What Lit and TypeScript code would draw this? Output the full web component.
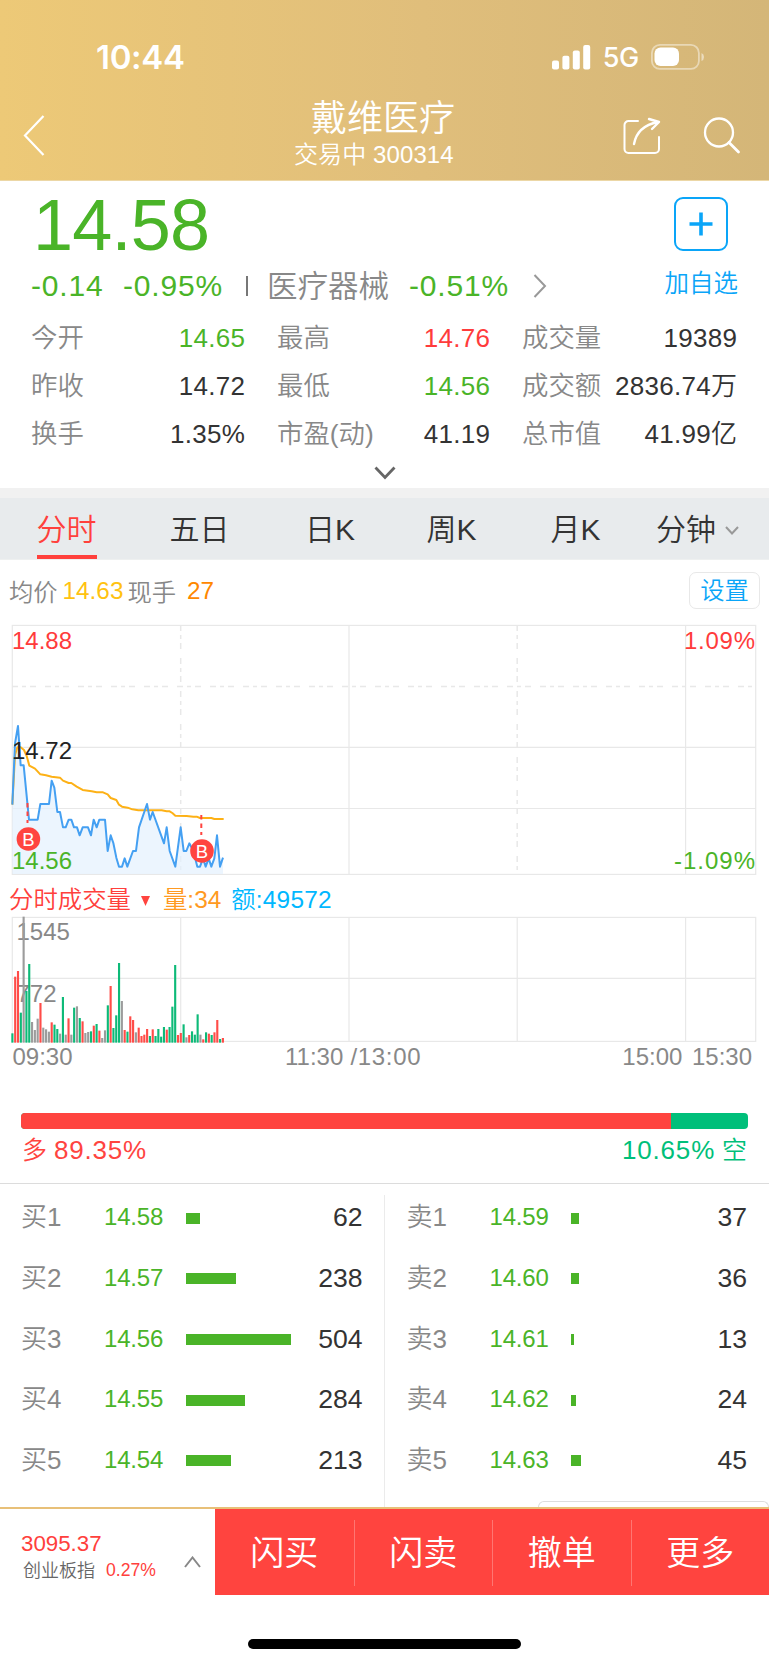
import { LitElement, html, css, svg } from "lit";
import { customElement } from "lit/decorators.js";

type Tone = "up" | "down" | "flat";

const STATS: [string, string, Tone][] = [
  ["今开", "14.65", "down"], ["最高", "14.76", "up"], ["成交量", "19389", "flat"],
  ["昨收", "14.72", "flat"], ["最低", "14.56", "down"], ["成交额", "2836.74万", "flat"],
  ["换手", "1.35%", "flat"], ["市盈(动)", "41.19", "flat"], ["总市值", "41.99亿", "flat"],
];

const BIDS: [string, string, number, number][] = [
  ["买1", "14.58", 13.5, 62], ["买2", "14.57", 49.5, 238], ["买3", "14.56", 105, 504],
  ["买4", "14.55", 59, 284], ["买5", "14.54", 44.5, 213],
];
const ASKS: [string, string, number, number][] = [
  ["卖1", "14.59", 8, 37], ["卖2", "14.60", 8, 36], ["卖3", "14.61", 3.5, 13],
  ["卖4", "14.62", 5.5, 24], ["卖5", "14.63", 10, 45],
];

/* Chart series use a grid of three units per CSS pixel. */
const PRICE =
  "37,554 45,370 54,318 62,436 71,436 87,599 113,599 121,552 147,552 155,482 163,503 172,576 180,576 189,622 197,622 206,599 214,599 222,622 231,622 239,646 248,622 264,622 273,646 281,599 290,622 298,599 315,599 323,693 332,646 340,669 349,713 357,740 366,740 374,715 382,740 399,693 408,693 417,622 441,552 450,599 458,576 492,670 500,622 509,693 526,740 542,622 551,693 559,693 568,670 580,693 592,740 600,740 609,715 617,740 626,715 634,740 643,715 651,646 660,740 669,713";
const AVERAGE =
  "37,554 45,405 52,382 62,382 72,390 80,408 88,437 105,446 121,463 138,466 155,470 180,473 189,482 206,489 214,489 230,500 248,510 275,514 290,517 309,517 323,523 332,534 349,540 357,554 366,560 383,563 397,568 415,571 485,571 500,574 509,574 517,579 526,587 560,588 580,590 590,590 600,594 634,594 643,597 671,597";
const VOLUME =
  "460g 290r 273r 398g 110x 333g 252g 426x 450x 416x 369r 443x 448x 455x 427r 434g 447g 461x 351g 464x 415r 464x 383g 379x 414g 424r 459x 456x 454g 437r 432g 452r 474x 451x 376g 318r 444g 406g 249g 363x 450r 455g 409r 420r 457x 443r 468r 464r 447r 468g 448r 468g 447g 470g 441g 449r 441g 380g 255g 465r 459r 433g 472x 465r 454g 464g 403g 464x 478r 457g 461r 465g 457r 420r 477g 474r".split(" ");

@customElement("app-root")
export class AppRoot extends LitElement {
  static styles = css`
    :host {
      display: block;
      width: 769px;
      height: 1665px;
      overflow: hidden;
      background: #fff;
      color: #333;
      font-family: "Liberation Sans", "Noto Sans CJK SC", sans-serif;
      font-weight: 350;
      white-space: nowrap;
    }
    * { box-sizing: border-box; }
    svg { display: block; flex: none; }
    .up { color: #ff3b3b; }
    .down { color: #4ab428; }
    .flat { color: #333; }

    .header {
      height: 181px;
      color: #fff;
      background: linear-gradient(90deg, #edc977, #e0be7b 55%, #d4b678);
      border-bottom: 1px solid #ecd7a6;
    }
    .status {
      display: flex;
      align-items: center;
      height: 99px;
      padding: 15px 64px 0 96px;
    }
    .clock { flex: 1; font: 600 33px/40px Inter, sans-serif; letter-spacing: -0.3px; }
    .net { font: 500 27px/34px Inter, sans-serif; margin: 2px 12px 0 12px; letter-spacing: -0.3px; }
    .nav { display: flex; height: 81px; }
    .nav svg.back { margin: 15px 0 0 22px; }
    .titles { flex: 1; display: flex; flex-direction: column; align-items: flex-start; padding: 2px 0 0 249px; }
    .title { font-size: 36px; line-height: 36px; margin: 0 0 0 17px; }
    .subtitle { font-size: 24px; line-height: 28px; margin-top: 4px; letter-spacing: 0.1px; }
    .share { margin: 17px 41px 0 0; }
    .search { margin: 17px 28px 0 0; }

    .quote { height: 307px; padding: 5px 31px 0 31px; }
    .top { display: flex; height: 76px; justify-content: space-between; }
    .price { font-size: 72px; line-height: 78px; margin-left: 2px; letter-spacing: -0.8px; }
    .add { width: 54px; height: 54px; margin: 11px 10px 0 0; border: 2px solid #0aa5f8; border-radius: 9px; display: grid; place-items: center; }
    .change { display: flex; align-items: center; height: 47px; font-size: 30px; color: #4ab428; }
    .change span { line-height: 46px; }
    .c1, .c2, .c3 { letter-spacing: 0.8px; flex: none; }
    .c1 { width: 92px; }
    .c2, .c3 { width: 124px; }
    .c2 { width: 123px; }
    .sector { color: #888; width: 142px; font-size: 30.5px; }
    .bar { width: 2px; height: 20px; background: #777; margin: 0 19px 0 0; }
    .follow { margin-left: auto; color: #0aa5f8; font-size: 24.5px; padding-bottom: 4px; }
    .stats { display: grid; grid-template-columns: 214px 213px 215px; column-gap: 32px; grid-auto-rows: 48px; padding-top: 5px; }
    .stat { display: flex; justify-content: space-between; font-size: 26.4px; line-height: 48px; }
    .stat .k { color: #888; }
    .stat .v { font-size: 26px; letter-spacing: 0.3px; margin-right: -0.3px; }
    .expand { display: grid; place-items: center; height: 20px; margin-top: 5px; }

    .gap { height: 10px; background: #f1f1f1; }
    .tabs { display: grid; grid-template-columns: 133px 133px 128px 115px 133px 127px; height: 62px; background: #e8ebed; border-bottom: 1px solid #eef0f0; font-size: 30px; line-height: 64px; }
    .tab { display: flex; justify-content: center; }
    .tab.active { color: #ff403c; }
    .tab.active span { height: 61px; border-bottom: 4px solid #ff403c; }
    .tab.more { align-items: center; justify-content: flex-start; padding-left: 14px; gap: 9px; }

    .info { display: flex; align-items: center; height: 64px; padding: 0 9px 4px; font-size: 24.3px; color: #888; }
    .info .avg { color: #ffc211; margin: 2px 4px 0 5px; }
    .info .last { color: #ff8800; margin: 2px 0 0 11px; }
    .settings { margin-left: auto; width: 71px; height: 37px; border: 1.5px solid #e8e8e8; border-radius: 7px; color: #0aa5f8; line-height: 35px; text-align: center; }
    .plot text { font-family: "Liberation Sans", sans-serif; font-size: 24px; }
    .volhead { display: flex; align-items: center; height: 36px; padding: 11px 9px 0; font-size: 24.4px; line-height: 25px; color: #ff403c; }
    .volhead svg { margin: 2px 13px 0 10px; }
    .volhead .amt { color: #00b7ff; margin-left: 10px; letter-spacing: 0.2px; }
    .volhead .vol { color: #ff9a22; }

    .ratio { padding: 34px 21px 0; height: 105px; border-bottom: 1.5px solid #dcdcdc; }
    .track { display: flex; height: 16px; border-radius: 4px; overflow: hidden; background: #00bf7a; }
    .long { background: #ff443f; }
    .sides { display: flex; justify-content: space-between; font-size: 25px; line-height: 38px; padding: 2px 1px 0; color: #00bf7a; }
    .sides b { font-weight: inherit; font-size: 26px; letter-spacing: 0.8px; }
    .sides .up { color: #ff443f; }

    .book { display: grid; grid-template-columns: 1fr 1fr; height: 323px; padding-top: 1px; position: relative; }
    .side { padding: 2px 22px 0 21px; }
    .side + .side { border-left: 1px solid #ebebeb; margin-top: 10px; margin-left: -1px; padding: 0 22px; }
    .side + .side .level:first-child { margin-top: -8px; }
    .side + .side .lp { width: 81px; }
    .level { display: flex; align-items: center; height: 60.65px; font-size: 24px; }
    .level span { line-height: 30px; }
    .level .lk { color: #888; width: 83px; font-size: 26px; height: 30px; line-height: 30px; }
    .lp { width: 82px; letter-spacing: -0.2px; color: #4ab428; }
    .lb { height: 11px; margin-top: 2px; background: #4ab428; }
    .lq { margin-left: auto; font-size: 26.6px; }
    .sheet { position: absolute; right: 0; bottom: 0; width: 231px; height: 6px; border: 1.5px solid #ddd; border-bottom: 0; border-radius: 7px 7px 0 0; }

    .footer { display: flex; height: 88px; border-top: 2.5px solid #e8c078; }
    .index { flex: none; display: flex; align-items: center; justify-content: space-between; width: 215px; padding: 11px 14px 0 21px; font-size: 22.3px; color: #ff403c; }
    .ival { line-height: 26px; }
    .iname { display: flex; font-size: 18px; line-height: 28px; gap: 11px; padding-left: 2px; }
    .iname i { font-style: normal; color: #666; }
    .iname span { font-size: 17.6px; line-height: 26px; }
    .index svg { margin-top: 9px; }
    .actions { flex: 1; display: grid; grid-template-columns: repeat(4, 1fr); background: #ff443f; color: #fff; font-size: 34px; padding: 11px 0 9px; }
    .action { display: grid; place-items: center; line-height: 40px; }
    .action + .action { border-left: 1px solid #ff7672; }
    .home { width: 273px; height: 10px; margin: 44px auto 0; border-radius: 5px; background: #000; }
  `;

  private side(rows: [string, string, number, number][]) {
    return html`<div class="side">${rows.map(
      ([k, p, w, q]) => html`<div class="level">
        <span class="lk">${k}</span><span class="lp">${p}</span>
        <span class="lb" style="width:${w}px"></span><span class="lq">${q}</span>
      </div>`
    )}</div>`;
  }

  private buyMark(x: number, y: number) {
    return svg`<circle cx=${x} cy=${y} r="11.8" fill="#ff443f" />
      <text x=${x} y=${y + 6.8} text-anchor="middle" fill="#fff" style="font-size:18.5px">B</text>`;
  }

  private priceChart() {
    return html`<svg class="plot" width="769" height="252" viewBox="0 624 769 252">
      <g stroke="#e8e8e8" stroke-width="1.2" fill="none">
        <rect x="12.3" y="625.4" width="743.4" height="249" />
        <path d="M12 747.4H756M12 808.5H756M349 625V874M685.6 625V874" />
        <path d="M12 686.4H756M180.7 625V874M517.2 625V874" stroke-width="1.5" stroke-dasharray="6 4 4 4 6 9" />
      </g>
      <g transform="translate(0 620) scale(.33333)" stroke-linejoin="round">
        <polygon points="37,762 ${PRICE} 669,762" fill="#e4f1fd" fill-opacity=".7" />
        <polyline points=${AVERAGE} fill="none" stroke="#fdb116" stroke-width="6" />
        <polyline points=${PRICE} fill="none" stroke="#45a0f2" stroke-width="6" />
      </g>
      <g stroke="#ff443f" stroke-width="2" stroke-dasharray="4.5 4">
        <path d="M27.5 803V823M201.3 815V835" />
      </g>
      ${this.buyMark(28.4, 839)}${this.buyMark(202, 851)}
      <text x="12" y="649.3" fill="#ff3b3b">14.88</text>
      <text x="12" y="759.3" fill="#222">14.72</text>
      <text x="12" y="869.3" fill="#4ab428">14.56</text>
      <text x="684" y="649.3" textLength="71" fill="#ff3b3b">1.09%</text>
      <text x="674" y="869.3" textLength="81" fill="#4ab428">-1.09%</text>
    </svg>`;
  }

  private volumeChart() {
    const tone: Record<string, string> = { r: "#ff4c48", g: "#0dba78", x: "#9c9c9c" };
    return html`<svg class="plot" width="769" height="167" viewBox="0 912 769 167">
      <g stroke="#e8e8e8" stroke-width="1.2" fill="none">
        <rect x="12.3" y="917.4" width="743.4" height="124" />
        <path d="M12 978.4H756M180.7 917V1041M349 917V1041M517.2 917V1041M685.6 917V1041" />
      </g>
      <g fill="#888">
        <text x="16.5" y="940.4">1545</text><text x="16.5" y="1002.3">772</text>
        <text x="12.5" y="1065.4">09:30</text>
        <text x="285" y="1065.4">11:30</text><text x="350.5" y="1065.4" textLength="70">/13:00</text>
        <text x="622.3" y="1065.4">15:00</text><text x="692" y="1065.4">15:30</text>
      </g>
      <g transform="translate(0 880) scale(.33333)">
        ${VOLUME.map((v, i) => {
          const top = parseInt(v);
          return svg`<rect x=${34 + i * 8.42} y=${top} width="6.4" height=${488 - top} fill=${tone[v.slice(-1)]} />`;
        })}
      </g>
    </svg>`;
  }

  render() {
    return html`
      <div class="header">
        <div class="status">
          <span class="clock">10:44</span>
          <svg width="39" height="25" viewBox="0 0 39 25" fill="#fff">
            <rect x="0" y="15.5" width="7" height="9" rx="2" /><rect x="10.4" y="10.8" width="7" height="13.7" rx="2" />
            <rect x="20.8" y="5.5" width="7" height="19" rx="2" /><rect x="31.2" y="0" width="7" height="24.5" rx="2" />
          </svg>
          <span class="net">5G</span>
          <svg width="54" height="26" viewBox="0 0 54 26">
            <rect x=".9" y=".9" width="47" height="24" rx="8" fill="none" stroke="#fff" stroke-opacity=".45" stroke-width="1.8" />
            <rect x="3.5" y="3.6" width="24.5" height="18.4" rx="6" fill="#fff" /><path d="M50.5 9Q53 10 53 13T50.5 17Z" fill="#fff" fill-opacity=".5" />
          </svg>
        </div>
        <div class="nav">
          <svg class="back" width="23" height="44" viewBox="0 0 23 44" fill="none" stroke="#fff" stroke-width="2.2"><path d="M21.5 2L3 21.5L21.5 41" /></svg>
          <div class="titles"><div class="title">戴维医疗</div><div class="subtitle">交易中 300314</div></div>
          <svg class="share" width="40" height="40" viewBox="0 0 40 40" fill="none" stroke="#fff" stroke-width="2" stroke-linecap="round" stroke-linejoin="round">
            <path d="M16 5H6.5A4 4 0 0 0 2.5 9V33A4 4 0 0 0 6.5 37H33A4 4 0 0 0 37 33V21" />
            <path d="M12 28C14 17 21 9 36 6M27 3L37 6L30 13" stroke-width="2.4" />
          </svg>
          <svg class="search" width="38" height="40" viewBox="0 0 38 40" fill="none" stroke="#fff" stroke-width="2.3" stroke-linecap="round">
            <circle cx="16" cy="16.5" r="14" /><path d="M26 26.5L35.5 36" stroke-width="2.8" />
          </svg>
        </div>
      </div>

      <div class="quote">
        <div class="top">
          <div class="price down">14.58</div>
          <div class="add"><svg width="24" height="24" viewBox="0 0 24 24" stroke="#0aa5f8" stroke-width="3.6"><path d="M12 .5V23.5M.5 12H23.5" /></svg></div>
        </div>
        <div class="change">
          <span class="c1">-0.14</span><span class="c2">-0.95%</span><i class="bar"></i>
          <span class="sector">医疗器械</span><span class="c3">-0.51%</span>
          <svg class="go" width="14" height="24" viewBox="0 0 14 24" fill="none" stroke="#999" stroke-width="2"><path d="M1.5 1L12 12L1.5 23" /></svg>
          <span class="follow">加自选</span>
        </div>
        <div class="stats">${STATS.map(([k, v, t]) => html`<div class="stat"><span class="k">${k}</span><span class="v ${t}">${v}</span></div>`)}</div>
        <div class="expand"><svg width="22" height="14" viewBox="0 0 22 14" fill="none" stroke="#666" stroke-width="2.8"><path d="M1.5 1.5L11 11.5L20.5 1.5" /></svg></div>
      </div>

      <div class="gap"></div>
      <div class="tabs">
        <div class="tab active"><span>分时</span></div><div class="tab">五日</div><div class="tab">日K</div>
        <div class="tab">周K</div><div class="tab">月K</div>
        <div class="tab more">分钟<svg width="14" height="9" viewBox="0 0 14 9" fill="none" stroke="#999" stroke-width="2"><path d="M1 1L7 7.5L13 1" /></svg></div>
      </div>
      <div class="info">均价<span class="avg">14.63</span>现手<span class="last">27</span><span class="settings">设置</span></div>
      ${this.priceChart()}
      <div class="volhead">分时成交量<svg width="9" height="10" viewBox="0 0 9 10" fill="#ff443f"><path d="M0 0H9L4.5 10Z" /></svg><span class="vol">量:34</span><span class="amt">额:49572</span></div>
      ${this.volumeChart()}

      <div class="ratio">
        <div class="track"><div class="long" style="width:89.35%"></div></div>
        <div class="sides"><span class="up">多 <b>89.35%</b></span><span><b>10.65%</b> 空</span></div>
      </div>
      <div class="book">${this.side(BIDS)}${this.side(ASKS)}<div class="sheet"></div></div>
      <div class="footer">
        <div class="index">
          <div><div class="ival">3095.37</div><div class="iname"><i>创业板指</i><span>0.27%</span></div></div>
          <svg width="17" height="12" viewBox="0 0 17 12" fill="none" stroke="#888" stroke-width="2"><path d="M1 11L8.5 1.5L16 11" /></svg>
        </div>
        <div class="actions">${["闪买", "闪卖", "撤单", "更多"].map((t) => html`<div class="action">${t}</div>`)}</div>
      </div>
      <div class="home"></div>
    `;
  }
}
